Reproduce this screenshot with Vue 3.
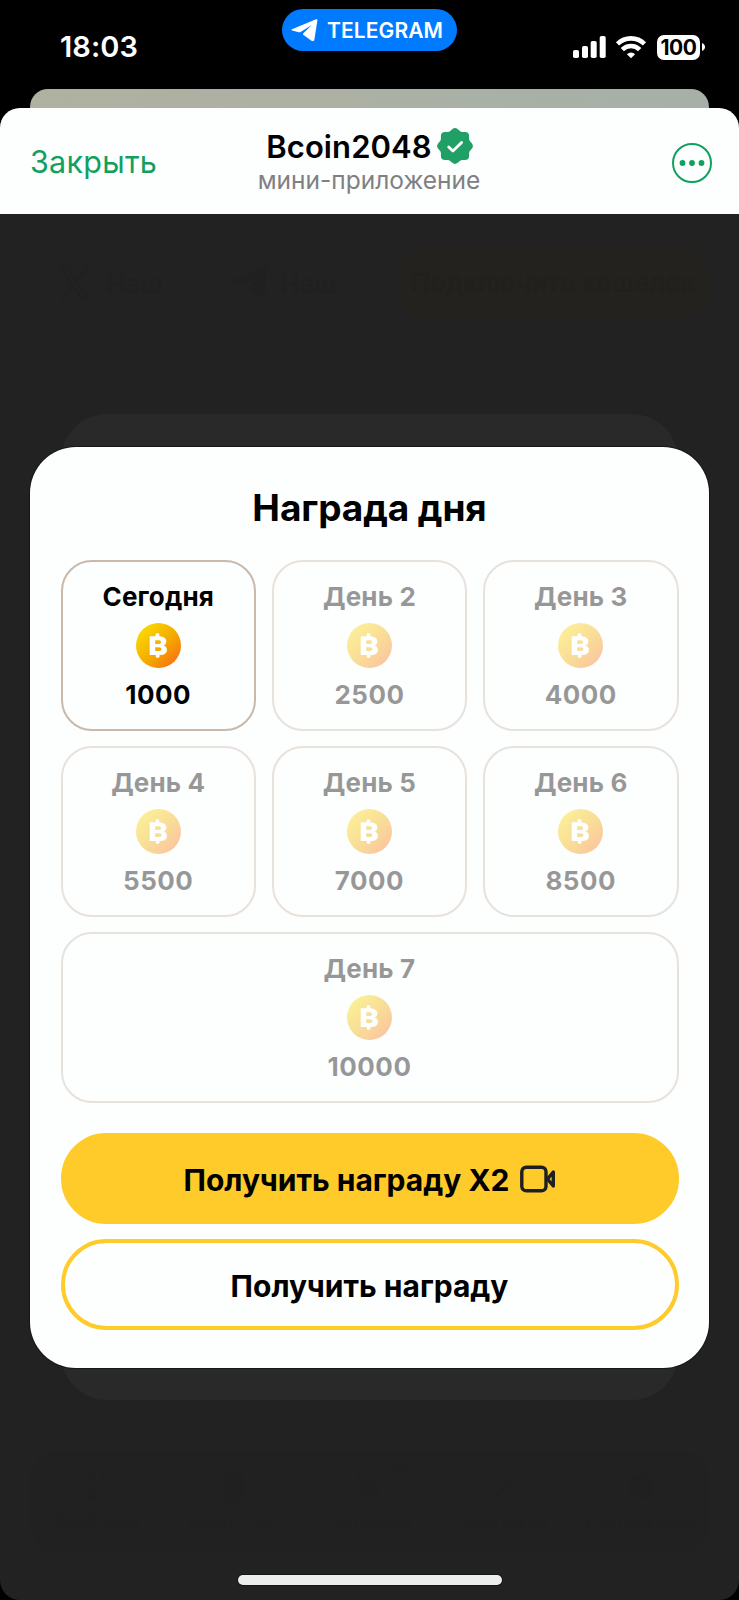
<script setup>
const days = [
  { label: 'Сегодня', amount: 1000, today: true },
  { label: 'День 2', amount: 2500 },
  { label: 'День 3', amount: 4000 },
  { label: 'День 4', amount: 5500 },
  { label: 'День 5', amount: 7000 },
  { label: 'День 6', amount: 8500 },
  { label: 'День 7', amount: 10000, wide: true },
]
const tabs = [
  { label: 'Мой Бро', icon: 'M8 4h5v7H8ZM19 4h4v5h-4ZM6 15h8v14H8Z' },
  { label: 'Братства', icon: 'M16 2C7 2 6 10 6 16S9 30 16 30 26 22 26 16 25 2 16 2Z' },
  { label: 'Задания', icon: 'M4 3 16 11 27 4 22 16 28 28 17 23 6 28 10 16Z', count: 56 },
  { label: 'Бустеры', icon: 'M26 3 22 14 12 20 8 29 6 27 11 16 20 10Z' },
  { label: 'Поддержка', icon: 'M16 3 20 6 25 7 26 12 29 16 26 20 25 25 20 26 16 30 12 26 7 25 6 20 3 16 6 12 7 7 12 6Z' },
]
</script>

<template>
  <div class="phone">
    <header class="status">
      <span class="time">18:03</span>
      <div class="pill">
        <svg class="plane" viewBox="0 0 27 23"><path d="M1 10.2 25 .3c1-.4 1.600.1 1.400 1.200L23.400 20.600c-.3 1.700-1.600 2-2.900 1.100L12.500 15.900c-.7-.5-.7-1.100-.1-1.700L20.800 6 9.600 13c-.6.400-1.200.4-1.900.2L1.100 11.500C.2 11.200.1 10.600 1 10.200Z" fill="#fff" /></svg>
        <span class="pill-text">TELEGRAM</span>
      </div>
      <div class="indicators">
        <svg class="signal" viewBox="0 0 33 22" fill="#fff">
          <rect x="0" y="14" width="6" height="8" rx="1.8" />
          <rect x="9" y="10" width="6" height="12" rx="1.8" />
          <rect x="17.700" y="5" width="6" height="17" rx="1.800" />
          <rect x="26.700" y="0" width="6" height="22" rx="1.800" />
        </svg>
        <svg class="wifi" viewBox="0 0 30 22" fill="none" stroke="#fff" stroke-width="4.600">
          <path d="M1.500 7.800a19.500 19.500 0 0 1 27 0" />
          <path d="M6.300 13.600a12.400 12.400 0 0 1 17.400 0" />
          <path d="M15 22.300 10.900 18.200a6 6 0 0 1 8.200 0Z" fill="#fff" stroke="none" />
        </svg>
        <div class="battery">100</div>
        <svg class="cap" viewBox="0 0 3 8"><path d="M0 0C4 1.500 4 6.500 0 8Z" fill="#fff" /></svg>
      </div>
    </header>
    <div class="sheet-behind"></div>
    <main class="sheet">
      <div class="bar">
        <span class="close">Закрыть</span>
        <div class="heading">
          <div class="name-row">
            <span class="name">Bcoin2048</span>
            <svg class="badge" viewBox="0 0 36 36">
              <path d="M15.200 1.200Q18-1 20.800 1.200L22.800 3Q24 4 25.600 3.900L28 3.900Q32 4 32.100 8L32.100 10.400Q32 12 33 13.200L34.800 15.200Q37 18 34.800 20.800L33 22.800Q32 24 32.100 25.600L32.100 28Q32 32 28 32.100L25.600 32.100Q24 32 22.800 33L20.800 34.800Q18 37 15.200 34.800L13.200 33Q12 32 10.400 32.100L8 32.100Q4 32 3.900 28L3.900 25.600Q4 24 3 22.800L1.200 20.800Q-1 18 1.200 15.200L3 13.200Q4 12 3.900 10.400L3.900 8Q4 4 8 3.900L10.400 3.900Q12 4 13.200 3Z" fill="#21a065" />
              <path d="m11.700 19 4.200 4.100 8.700-8.600" fill="none" stroke="#fff" stroke-width="2.800" stroke-linecap="round" stroke-linejoin="round" />
            </svg>
          </div>
          <span class="kind">мини-приложение</span>
        </div>
        <svg class="more" viewBox="0 0 40 40" fill="#11a05f">
          <circle cx="20" cy="20" r="19" fill="none" stroke="#11a05f" stroke-width="2" />
          <circle cx="10.500" cy="20" r="2.900" /><circle cx="20" cy="20" r="2.900" /><circle cx="29.500" cy="20" r="2.900" />
        </svg>
      </div>
      <div class="page">
        <div class="links">
          <svg viewBox="0 0 34 34" class="x-icon"><path d="M2 1h7l22 32h-7ZM30 1 3 33" fill="none" stroke="#202020" stroke-width="2" /></svg>
          <span class="our">Наш</span>
          <svg viewBox="0 0 27 23" class="tg-icon"><path d="M1 10.200 25 .3 23 22 12 15 21 6 9 13Z" fill="#202020" /></svg>
          <span class="our">Наш</span>
          <span class="wallet">Подключить кошелек</span>
        </div>
        <nav class="tabs">
          <div v-for="tab in tabs" :key="tab.label" class="tab">
            <svg viewBox="0 0 32 32" class="tab-icon"><path :d="tab.icon" fill="#202020" /></svg>
            <span v-if="tab.count" class="count">{{ tab.count }}</span>
            <span>{{ tab.label }}</span>
          </div>
        </nav>
      </div>
    </main>

    <div class="card-behind"></div>
    <section class="card">
      <h1 class="title">Награда дня</h1>
      <div class="grid">
        <div v-for="day in days" :key="day.label" class="day" :class="{ today: day.today, wide: day.wide }">
          <span class="label">{{ day.label }}</span>
          <svg class="coin" viewBox="0 0 46 46">
            <defs>
              <linearGradient id="gold" x1="0.100" y1="0.100" x2="0.900" y2="0.900">
                <stop offset="0" stop-color="#fbdc00" />
                <stop offset="0.600" stop-color="#f3a600" />
                <stop offset="1" stop-color="#fb6f14" />
              </linearGradient>
            </defs>
            <circle cx="23" cy="23" r="23" fill="url(#gold)" />
            <path fill="#fff" fill-rule="evenodd" d="M14 13.500H20V11.800Q20 10.500 21.300 10.500H22.500Q23.800 10.500 23.800 11.800V13.500C28.500 13.700 31 15.600 31 18.800C31 21 29.800 22.400 28 23C30.200 23.500 31.600 25.200 31.600 27.500C31.600 31 28.800 32.700 24 32.800V34.200Q24 35.500 22.700 35.500H21.500Q20.200 35.500 20.200 34.200V32.800H14ZM19.600 17.600V21.400H22.600C24.600 21.400 25.600 20.800 25.600 19.500C25.600 18.200 24.600 17.600 22.600 17.600ZM19.600 24.800V28.700H23C25 28.700 26 28 26 26.700C26 25.500 25 24.800 23 24.800Z" />
          </svg>
          <span class="amount">{{ day.amount }}</span>
        </div>
      </div>
      <button class="btn primary">
        <span>Получить награду X2</span>
        <svg class="video" viewBox="0 0 36 28" fill="none" stroke="#1c1f24" stroke-width="3.400" stroke-linejoin="round">
          <rect x="1.800" y="2.200" width="24.200" height="23.600" rx="4.500" />
          <path d="M27.500 14 33.300 7V21Z" />
        </svg>
      </button>
      <button class="btn outline"><span>Получить награду</span></button>
    </section>
    <div class="home"></div>
  </div>
</template>

<style>
body { background: #000; }
</style>

<style scoped>
.phone { position: relative; width: 739px; height: 1600px; overflow: hidden; background: #000; font-family: Inter, "Liberation Sans", sans-serif; display: flex; flex-direction: column; }
.status { height: 89px; position: relative; flex: none; display: flex; justify-content: space-between; box-sizing: border-box; padding: 30px 34px 0 60px; color: #fff; }
.time { font-size: 29px; line-height: 34px; font-weight: 600; letter-spacing: 0.100px; }
.pill { position: absolute; left: 282px; top: 9px; width: 175px; height: 42px; border-radius: 21px; background: #007aff; display: flex; align-items: center; box-sizing: border-box; padding-left: 9px; gap: 9px; }
.plane { width: 27px; height: 23px; }
.pill-text { font-size: 21px; font-weight: 600; letter-spacing: 0.100px; line-height: 42px; padding-top: 2px; }
.indicators { display: flex; align-items: center; height: 34px; }
.signal { width: 33px; height: 22px; margin-right: 10px; }
.wifi { width: 30px; height: 22px; margin-right: 11px; overflow: visible; }
.battery { width: 43px; height: 25px; border-radius: 7px; background: #fff; color: #000; font-size: 21px; font-weight: 700; line-height: 25px; text-align: center; letter-spacing: -0.500px; }
.cap { width: 3px; height: 8px; margin-left: 2px; }
.sheet-behind { flex: none; margin: 0 30px; height: 40px; border-radius: 18px 18px 0 0; background: linear-gradient(90deg, #b0b1a0, #a6b0a8); }
.sheet { position: relative; margin-top: -21px; flex: 1; display: flex; flex-direction: column; border-radius: 20px; overflow: hidden; background: #222; }
.bar { flex: none; height: 106px; background: #fdfefe; display: grid; grid-template-columns: 200px 1fr 200px; box-sizing: border-box; padding: 0 27px 0 30px; }
.close { color: #11a05f; font-size: 30.500px; letter-spacing: 0.250px; line-height: 36px; margin-top: 36px; }
.heading { display: flex; flex-direction: column; align-items: center; padding-top: 20px; }
.name-row { display: flex; align-items: center; gap: 5px; height: 37px; margin-right: 3px; }
.name { font-size: 31px; font-weight: 600; letter-spacing: 0.100px; line-height: 37px; white-space: nowrap; }
.badge { width: 36px; height: 36px; flex: none; margin-bottom: 2px; }
.kind { color: #808083; font-size: 24.500px; line-height: 30px; white-space: nowrap; margin-right: 4px; }
.more { width: 40px; height: 40px; justify-self: end; margin-top: 35px; }
.page { flex: 1; display: flex; flex-direction: column; justify-content: space-between; padding: 24px 30px 47px; color: #202020; }
.links { display: flex; align-items: center; height: 90px; padding-left: 28px; }
.x-icon { width: 34px; height: 34px; margin-right: 14px; }
.tg-icon { width: 40px; height: 34px; margin: 0 10px 0 60px; }
.our { font-size: 26px; font-weight: 600; width: 64px; }
.wallet { margin-left: auto; background: #23221f; color: #21201f; border-radius: 30px; font-size: 26px; line-height: 74px; font-weight: 600; width: 312px; text-align: center; white-space: nowrap; }
.tabs { height: 102px; background: #212121; border-radius: 30px; display: grid; grid-template-columns: repeat(5, 1fr); align-items: center; font-size: 20px; }
.tab { position: relative; display: flex; flex-direction: column; align-items: center; gap: 6px; }
.tab-icon { width: 34px; height: 34px; }
.count { position: absolute; left: 88px; top: -10px; font-size: 16px; }
.card-behind { position: absolute; left: 61px; top: 414px; width: 617px; height: 986px; border-radius: 46px; background: #292929; }
.card { position: absolute; left: 30px; top: 447px; width: 679px; height: 921px; box-sizing: border-box; padding: 36px 30.500px 0; border-radius: 46px; background: #fdfefe; box-shadow: 0 0 0 1px #161616; display: flex; flex-direction: column; color: #000; }
.title { margin: 0 0 27px; font-size: 37px; letter-spacing: -0.100px; line-height: 50px; font-weight: 700; text-align: center; }
.grid { display: grid; grid-template-columns: repeat(3, 195.500px); justify-content: space-between; grid-auto-rows: 171px; row-gap: 15px; }
.day { box-sizing: border-box; border: 2px solid #c9b9ab; border-radius: 31px; display: flex; flex-direction: column; align-items: center; padding-top: 19px; opacity: 0.400; }
.today { opacity: 1; }
.wide { grid-column: span 3; }
.label, .amount { font-size: 26px; line-height: 32px; font-weight: 700; }
.label { letter-spacing: 0.150px; }
.amount { letter-spacing: 0.500px; }
.coin { width: 45px; height: 45px; margin: 10px 0 11px; }
.btn { flex: none; height: 91px; box-sizing: border-box; border: 4px solid #fecb2a; border-radius: 46px; font: 700 30px/36px Inter, sans-serif; color: #000; display: flex; align-items: center; justify-content: center; gap: 10px; padding: 2px 0 0; }
.primary { background: #fecb2a; margin-top: 30px; }
.outline { background: transparent; margin-top: 15px; }
.video { width: 36px; height: 28px; margin-bottom: 2px; }
.home { position: absolute; left: 238px; top: 1575px; width: 264px; height: 10px; border-radius: 5px; background: #eceeed; box-shadow: 0 0 0 1px #161616; }
</style>
